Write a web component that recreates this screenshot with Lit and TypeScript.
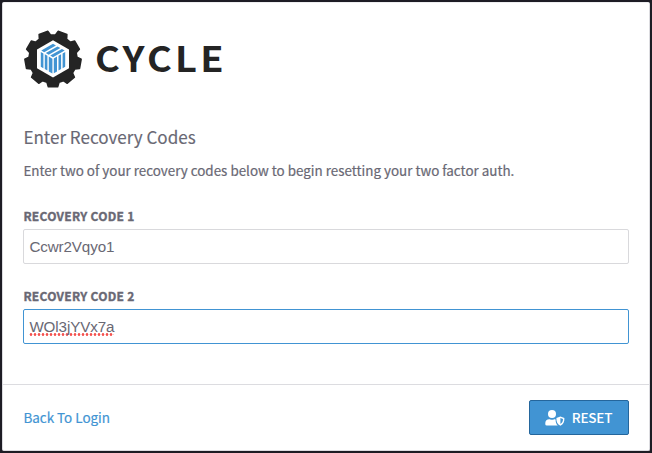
import { LitElement, html, css, svg } from "lit";
import { customElement } from "lit/decorators.js";

const TEETH = 9;

/* Outline of the cog: one tooth points straight down, the rest every 40 degrees. */
function cogPath(cx: number, cy: number, root: number, tip: number): string {
  const at = (deg: number, r: number) => {
    const a = (deg * Math.PI) / 180;
    return `${(cx + r * Math.cos(a)).toFixed(2)} ${(cy + r * Math.sin(a)).toFixed(2)}`;
  };
  const points: string[] = [];
  for (let i = 0; i < TEETH; i++) {
    const mid = 90 + (i * 360) / TEETH;
    points.push(at(mid - 14.5, root), at(mid - 9.5, tip), at(mid + 9.5, tip), at(mid + 14.5, root));
  }
  return `M${points.join("L")}Z`;
}

@customElement("cycle-logo")
export class CycleLogo extends LitElement {
  static styles = css`
    :host { display: flex; align-items: center; height: 60px; }
    .mark { flex: none; display: block; }
    .word {
      margin: -5px 0 0 13px;
      font: 700 34.5px/60px "Noto Sans CJK SC", sans-serif;
      letter-spacing: 2.9px;
      color: #242424;
      white-space: nowrap;
      transform: scaleX(1.1);
      transform-origin: 0 50%;
    }
  `;
  render() {
    return html`
      <svg class="mark" width="58" height="60" viewBox="0 0 58 60">
        ${svg`<path d=${cogPath(29, 30, 24, 28.1)} fill="#242424" stroke="#242424" stroke-width="1.6" stroke-linejoin="round" />`}
        <path d="M29 11.2 45 20.4V39.2L29 48.4 13 39.2V20.4Z" fill="#fff" />
        <g fill="#4194d3">
          <path d="M16.8 23 19.4 24.5V39.3L16.8 37.8ZM20.8 25.3 23.4 26.8V41.6L20.8 40.1ZM24.8 27.6 28.4 29.7V44.5L24.8 42.4Z" />
          <path d="M41.2 23 38.6 24.5V39.3L41.2 37.8ZM37.1 25.3 34.5 26.8V41.6L37.1 40.1ZM33 27.6 29.8 29.5V44.3L33 42.4Z" />
          <path d="M17.3 21.5 29 14.8 31.9 16.5 20.2 23.2ZM21.8 24.1 33.5 17.4 36.4 19.1 24.7 25.8ZM26.2 26.6 37.9 19.9 40.7 21.5 29 28.2Z" />
        </g>
      </svg>
      <span class="word">CYCLE</span>
    `;
  }
}

@customElement("app-root")
export class AppRoot extends LitElement {
  static styles = css`
    :host {
      display: block;
      box-sizing: border-box;
      height: 453px;
      padding: 2px;
      background: #1d1c24;
      font-family: "Noto Sans CJK SC", sans-serif;
      color: #696874;
    }
    * { box-sizing: border-box; }
    .card {
      display: flex;
      flex-direction: column;
      height: 449px;
      background: #fff;
      border: 1px solid #dcdce0;
      border-top-color: #eeeef0;
      border-radius: 2px;
    }
    .body { flex: 1; padding: 26px 20px 0 21px; }
    .title, .intro, .label { margin-left: -0.6px; }
    .title {
      margin-top: 35px;
      margin-bottom: 0;
      font-size: 17.05px;
      font-weight: 400;
      line-height: 26px;
      -webkit-text-stroke: 0.15px currentColor;
    }
    .intro {
      margin-top: 10px;
      margin-bottom: 0;
      font-size: 13.42px;
      line-height: 20px;
      -webkit-text-stroke: 0.2px currentColor;
    }
    .field { display: block; margin-top: 27px; }
    .field + .field { margin-top: 23px; }
    .label {
      display: block;
      font-size: 12px;
      line-height: 18px;
      font-weight: 700;
      letter-spacing: 0.28px;
      -webkit-text-stroke: 0.35px currentColor;
    }
    .input {
      display: block;
      width: 606px;
      height: 35px;
      margin: 4px 0 0 -1px;
      padding: 0 5.4px;
      border: 1px solid #d9d9dc;
      border-radius: 2px;
      font: 15.2px/34px "Liberation Sans", sans-serif;
      letter-spacing: -0.12px;
      color: #696874;
    }
    .active { border-color: #4194d3; }
    .misspelt {
      display: inline-block;
      height: 26px;
      line-height: 34px;
      background: radial-gradient(circle, #f5524f 1px, transparent 1.7px) 0 100% / 4px 3px repeat-x;
    }
    .footer {
      display: flex;
      align-items: center;
      justify-content: space-between;
      height: 66px;
      padding: 0 20px 0 20.4px;
      border-top: 1px solid #dcdce0;
    }
    .link {
      margin-top: -2px;
      font-size: 13.45px;
      color: #4194d3;
      text-decoration: none;
      -webkit-text-stroke: 0.2px currentColor;
    }
    .reset {
      display: flex;
      align-items: center;
      width: 100px;
      height: 35px;
      padding: 0 0 0 15px;
      border: 1px solid #24669c;
      border-radius: 2px;
      background: #4194d3;
      color: #fff;
      font: 500 13.5px/33px "Noto Sans CJK SC", sans-serif;
      letter-spacing: -0.2px;
    }
    .icon { flex: none; margin-right: 6.8px; }
  `;
  render() {
    return html`
      <section class="card">
        <div class="body">
          <cycle-logo></cycle-logo>
          <h1 class="title">Enter Recovery Codes</h1>
          <p class="intro">Enter two of your recovery codes below to begin resetting your two factor auth.</p>
          <div class="field">
            <span class="label">RECOVERY CODE 1</span>
            <div class="input">Ccwr2Vqyo1</div>
          </div>
          <div class="field">
            <span class="label">RECOVERY CODE 2</span>
            <div class="input active"><span class="misspelt">WOl3jYVx7a</span></div>
          </div>
        </div>
        <footer class="footer">
          <a class="link">Back To Login</a>
          <button class="reset">
            <svg class="icon" width="20" height="16" viewBox="0 0 20 16" fill="#fff">
              <circle cx="7" cy="4.1" r="4" />
              <path d="M4.2 9.2C1.9 9.2.3 10.9.3 13V14.2Q.3 15.6 1.8 15.6H12.8C11.3 14 10.6 12.2 10.6 9.4L9.8 9.2H9.2Q7 10.2 4.8 9.2Z" />
              <path fill-rule="evenodd" d="M15.4 6.5 19.4 8.1C19.6 11.6 18.4 14.4 15.4 15.8 12.4 14.4 11.2 11.6 11.4 8.1ZM15.4 8.1V14.1C17.2 13.1 18 11.2 18 9.1Z" />
            </svg>
            <span>RESET</span>
          </button>
        </footer>
      </section>
    `;
  }
}
